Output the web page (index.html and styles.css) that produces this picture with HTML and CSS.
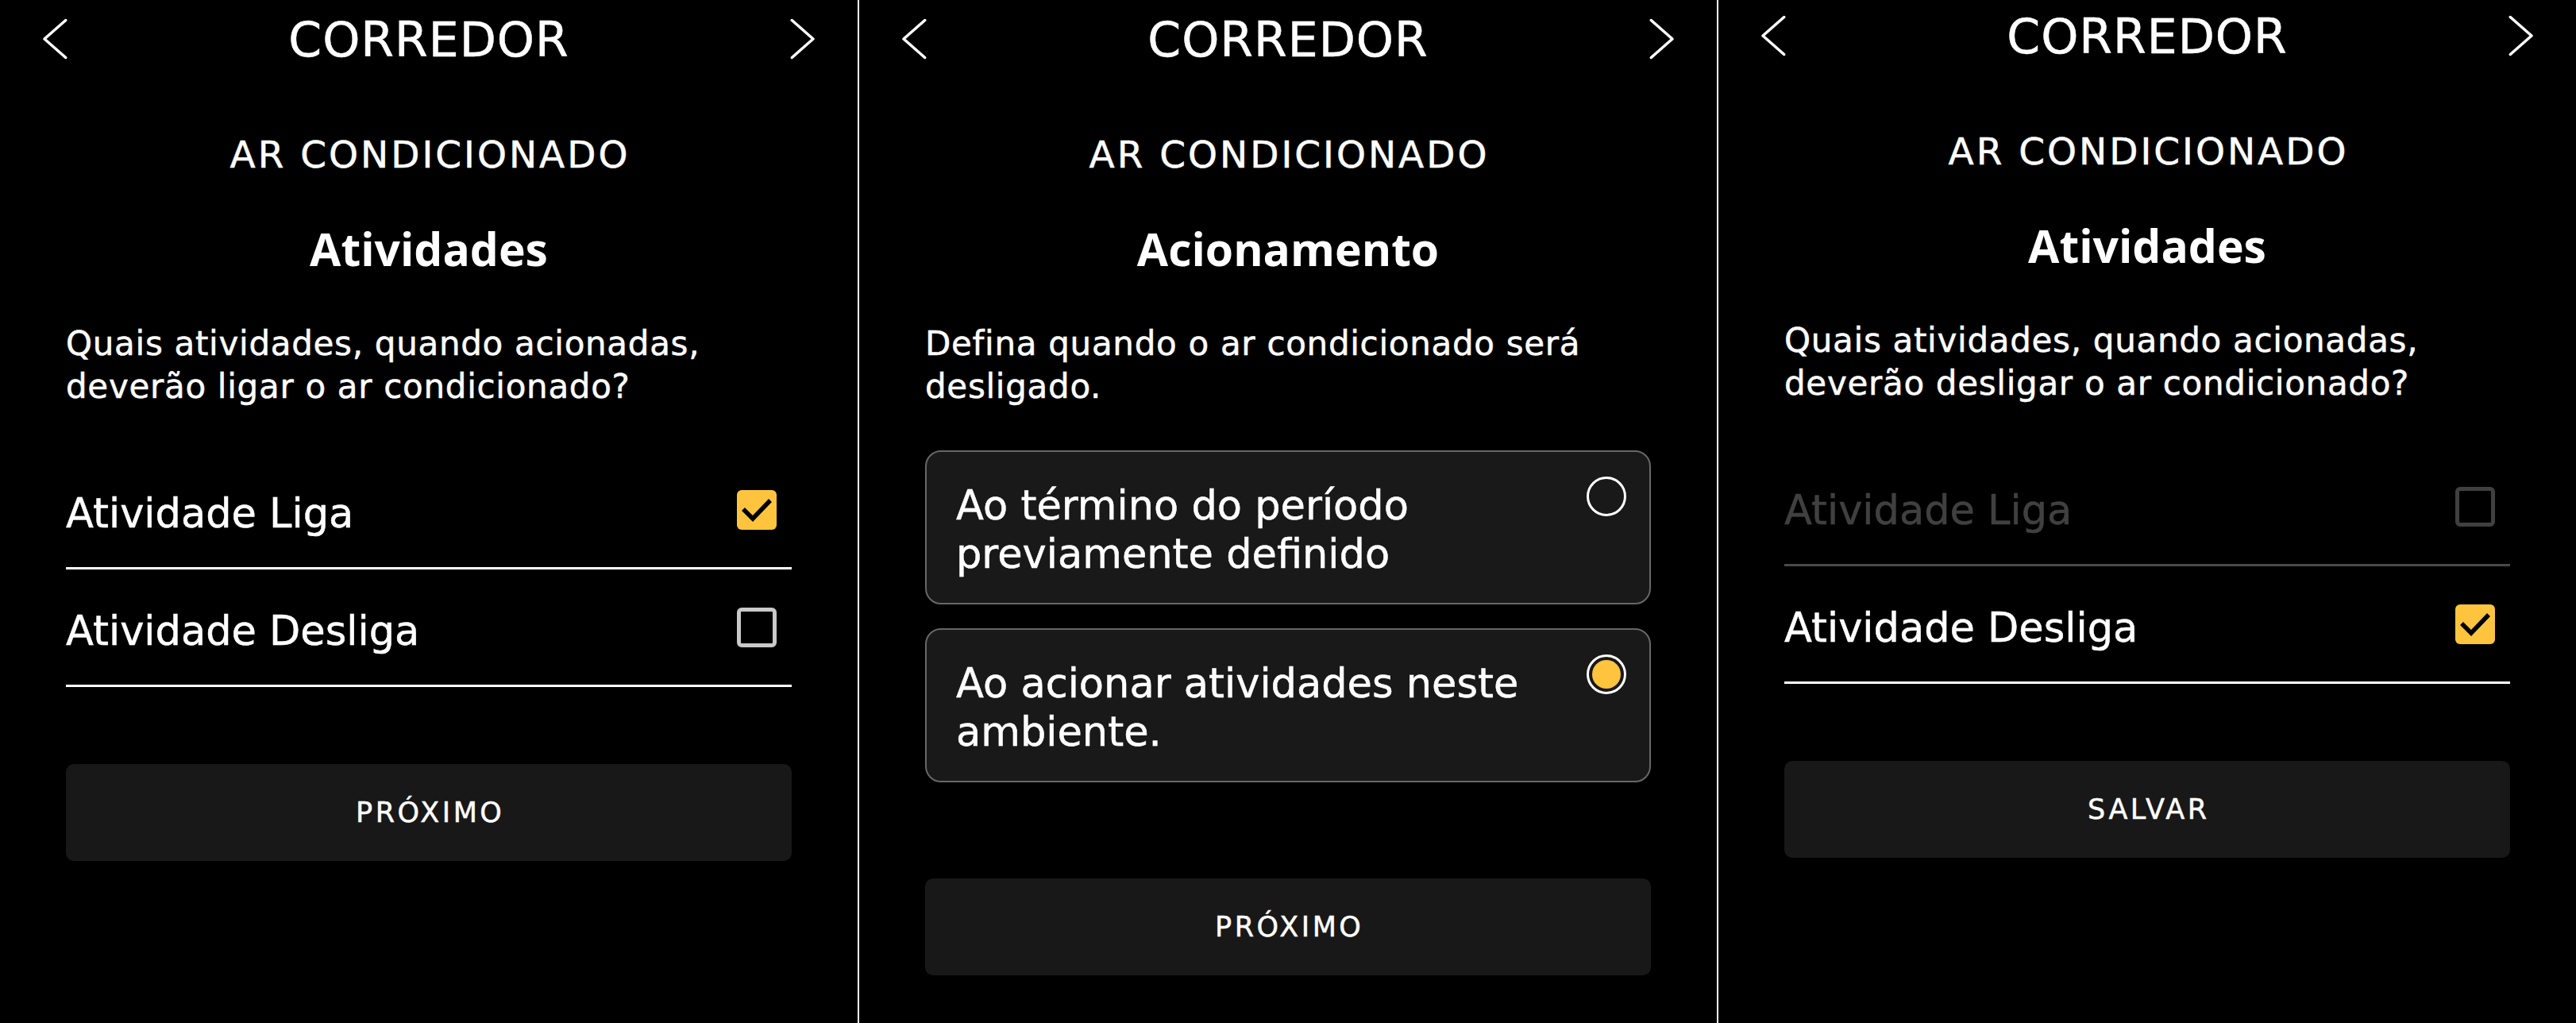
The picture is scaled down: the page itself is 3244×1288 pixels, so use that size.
FILE: index.html
```html
<!DOCTYPE html>
<html lang="pt-BR">
<head>
<meta charset="utf-8">
<title>Ar condicionado – Corredor</title>
<link rel="stylesheet" href="styles.css">
</head>
<body>
<div class="screens">

  <section class="panel">
    <header class="topbar">
      <svg class="chev" viewBox="0 0 32 52" width="32" height="52"><path d="M28.7 2.5 L2 26 L28.7 49.5"/></svg>
      <h1 class="room">CORREDOR</h1>
      <svg class="chev" viewBox="0 0 32 52" width="32" height="52"><path d="M3.3 2.5 L30 26 L3.3 49.5"/></svg>
    </header>
    <div class="content">
      <h2 class="device">AR CONDICIONADO</h2>
      <h3 class="step">Atividades</h3>
      <p class="question">Quais atividades, quando acionadas, deverão ligar o ar condicionado?</p>
      <ul class="list">
        <li class="row">
          <span class="label">Atividade Liga</span>
          <span class="check on"><svg viewBox="0 0 50 50" width="50" height="50"><polyline points="8,24 20,36 42,13"/></svg></span>
        </li>
        <li class="row">
          <span class="label">Atividade Desliga</span>
          <span class="check"></span>
        </li>
      </ul>
      <button class="action">PRÓXIMO</button>
    </div>
  </section>

  <section class="panel">
    <header class="topbar">
      <svg class="chev" viewBox="0 0 32 52" width="32" height="52"><path d="M28.7 2.5 L2 26 L28.7 49.5"/></svg>
      <h1 class="room">CORREDOR</h1>
      <svg class="chev" viewBox="0 0 32 52" width="32" height="52"><path d="M3.3 2.5 L30 26 L3.3 49.5"/></svg>
    </header>
    <div class="content">
      <h2 class="device">AR CONDICIONADO</h2>
      <h3 class="step">Acionamento</h3>
      <p class="question">Defina quando o ar condicionado será desligado.</p>
      <div class="options">
        <div class="option">
          <span class="option-text">Ao término do período previamente definido</span>
          <span class="radio"></span>
        </div>
        <div class="option">
          <span class="option-text">Ao acionar atividades neste ambiente.</span>
          <span class="radio on"></span>
        </div>
      </div>
      <button class="action action-far">PRÓXIMO</button>
    </div>
  </section>

  <section class="panel panel-up">
    <header class="topbar">
      <svg class="chev" viewBox="0 0 32 52" width="32" height="52"><path d="M28.7 2.5 L2 26 L28.7 49.5"/></svg>
      <h1 class="room">CORREDOR</h1>
      <svg class="chev" viewBox="0 0 32 52" width="32" height="52"><path d="M3.3 2.5 L30 26 L3.3 49.5"/></svg>
    </header>
    <div class="content">
      <h2 class="device">AR CONDICIONADO</h2>
      <h3 class="step">Atividades</h3>
      <p class="question">Quais atividades, quando acionadas, deverão desligar o ar condicionado?</p>
      <ul class="list">
        <li class="row disabled">
          <span class="label">Atividade Liga</span>
          <span class="check"></span>
        </li>
        <li class="row">
          <span class="label">Atividade Desliga</span>
          <span class="check on"><svg viewBox="0 0 50 50" width="50" height="50"><polyline points="8,24 20,36 42,13"/></svg></span>
        </li>
      </ul>
      <button class="action">SALVAR</button>
    </div>
  </section>

</div>
</body>
</html>
```

FILE: styles.css
```css
* {
  box-sizing: border-box;
}

html, body {
  margin: 0;
  padding: 0;
  background: #000;
}

body {
  width: 3244px;
  height: 1288px;
  overflow: hidden;
  color: #fff;
  font-family: "DejaVu Sans", "Liberation Sans", sans-serif;
  -webkit-text-stroke: 0.5px currentColor;
}

.screens {
  display: flex;
  height: 1288px;
}

.panel {
  box-sizing: content-box;
  width: 1080px;
  height: 1284px;
  padding-top: 4px;
  flex-shrink: 0;
}

.panel + .panel {
  border-left: 2px solid #fff;
}

.panel-up {
  height: 1288px;
  padding-top: 0;
}

/* header */
.topbar {
  display: flex;
  align-items: center;
  height: 92px;
  padding: 0 54px;
}

.chev {
  flex-shrink: 0;
  margin-top: -3px;
  fill: none;
  stroke: #fff;
  stroke-width: 3.5;
  stroke-linecap: round;
  stroke-linejoin: round;
}

.room {
  flex: 1;
  margin: 0;
  font-size: 60px;
  font-weight: 400;
  line-height: 92px;
  letter-spacing: 1px;
  text-align: center;
}

/* content */
.content {
  padding: 0 83px;
}

.device {
  margin: 69px 0 0;
  padding-left: 3px;
  font-size: 47px;
  font-weight: 400;
  line-height: 60px;
  letter-spacing: 3px;
  text-align: center;
}

.step {
  margin: 53px 0 0;
  font-family: "Open Sans", "DejaVu Sans", sans-serif;
  font-size: 57px;
  font-weight: 700;
  line-height: 70px;
  text-align: center;
  -webkit-text-stroke: 0;
}

.question {
  margin: 58px 0 0;
  font-size: 42px;
  line-height: 54px;
  letter-spacing: 0.7px;
}

/* checkbox list */
.list {
  list-style: none;
  margin: 55px 0 0;
  padding: 0;
}

.row {
  display: flex;
  align-items: center;
  justify-content: space-between;
  height: 148px;
  border-bottom: 3px solid #fff;
}

.label {
  padding-top: 10px;
  font-size: 51px;
  line-height: 60px;
}

.check {
  width: 50px;
  height: 50px;
  margin-right: 19px;
  border: 5px solid #c9c9c9;
  border-radius: 6px;
  flex-shrink: 0;
}

.check.on {
  border: 0;
  background: #ffc43d;
}

.check svg {
  display: block;
  fill: none;
  stroke: #000;
  stroke-width: 5.5;
  stroke-linecap: butt;
  stroke-linejoin: miter;
}

.row.disabled {
  border-bottom-color: #4a4a4a;
}

.row.disabled .label {
  color: #404040;
}

.row.disabled .check {
  border-color: #404040;
}

/* radio options */
.options {
  margin-top: 53px;
}

.option {
  display: flex;
  align-items: flex-start;
  justify-content: space-between;
  gap: 20px;
  padding: 31px 29px 31px 37px;
  border: 2px solid #676767;
  border-radius: 20px;
  background: #191919;
}

.option + .option {
  margin-top: 30px;
}

.option-text {
  margin-top: 6px;
  font-size: 51px;
  line-height: 61px;
}

.radio {
  width: 50px;
  height: 50px;
  flex-shrink: 0;
  border: 3px solid #fff;
  border-radius: 50%;
}

.radio.on {
  display: grid;
  place-items: center;
}

.radio.on::after {
  content: "";
  width: 36px;
  height: 36px;
  border-radius: 50%;
  background: #ffc43d;
}

/* button */
.action {
  display: block;
  width: 100%;
  height: 122px;
  margin-top: 97px;
  padding: 0 0 0 3.5px;
  border: 0;
  border-radius: 10px;
  background: #181818;
  color: #fff;
  font-family: "DejaVu Sans", "Liberation Sans", sans-serif;
  font-size: 35px;
  letter-spacing: 3.5px;
  text-align: center;
  -webkit-text-stroke: 0.5px currentColor;
}

.action-far {
  margin-top: 121px;
}
```
